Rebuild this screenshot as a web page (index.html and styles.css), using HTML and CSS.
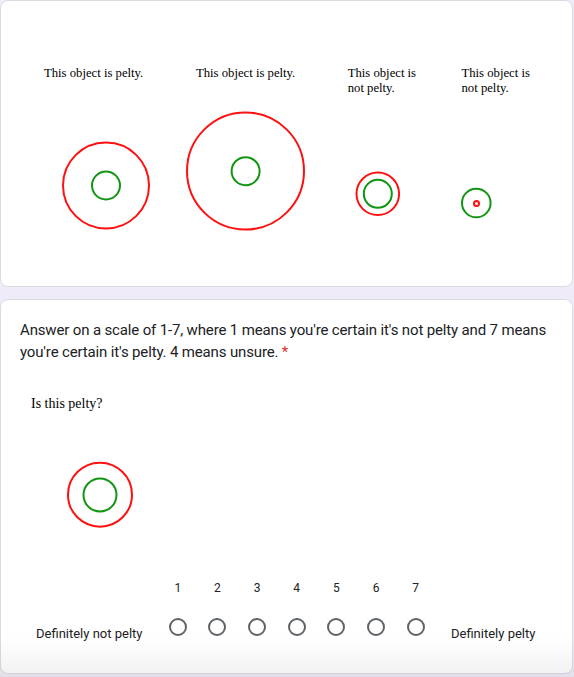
FILE: index.html
```html
<!DOCTYPE html>
<html lang="en">
<head>
<meta charset="utf-8">
<title>Is this pelty?</title>
<link rel="stylesheet" href="styles.css">
</head>
<body>
<main class="page">
  <section class="card card-figure">
    <svg class="figure" width="570" height="285" viewBox="0 0 570 285" aria-label="Examples of pelty and not pelty objects">
      <g transform="translate(-1,-1)">
        <text class="cap" x="44" y="77">This object is pelty.</text>
        <text class="cap" x="196" y="77">This object is pelty.</text>
        <text class="cap" x="347.7" y="77">This object is</text>
        <text class="cap" x="347.7" y="91.5">not pelty.</text>
        <text class="cap" x="461.5" y="77">This object is</text>
        <text class="cap" x="461.5" y="91.5">not pelty.</text>

        <circle class="red" cx="106" cy="185.5" r="43"/>
        <circle class="green" cx="106" cy="185.5" r="14"/>

        <circle class="red" cx="245.5" cy="171" r="58.5"/>
        <circle class="green" cx="245.6" cy="171.2" r="14"/>

        <circle class="red" cx="377.8" cy="193.8" r="21.3"/>
        <circle class="green" cx="377.8" cy="193.8" r="14"/>

        <circle class="green" cx="476.3" cy="203" r="14.3"/>
        <circle class="red" cx="476.5" cy="203.4" r="2.5"/>
      </g>
    </svg>
  </section>

  <section class="card card-question">
    <h2 class="q-title">Answer on a scale of 1-7, where 1 means you're certain it's not pelty and 7 means you're certain it's pelty. 4 means unsure. <span class="req">*</span></h2>

    <div class="q-image">
      <p class="q-caption">Is this pelty?</p>
      <svg class="q-svg" width="200" height="167.7" viewBox="0 0 200 167.7" aria-hidden="true">
        <circle class="red" cx="80" cy="82.7" r="32"/>
        <circle class="green" cx="80" cy="83" r="16.5"/>
      </svg>
    </div>

    <div class="scale">
      <div class="scale-label left">Definitely not pelty</div>
      <label class="opt"><span class="num">1</span><span class="radio"></span></label>
      <label class="opt"><span class="num">2</span><span class="radio"></span></label>
      <label class="opt"><span class="num">3</span><span class="radio"></span></label>
      <label class="opt"><span class="num">4</span><span class="radio"></span></label>
      <label class="opt"><span class="num">5</span><span class="radio"></span></label>
      <label class="opt"><span class="num">6</span><span class="radio"></span></label>
      <label class="opt"><span class="num">7</span><span class="radio"></span></label>
      <div class="scale-label right">Definitely pelty</div>
    </div>
  </section>
</main>
<div class="bottom-fade"></div>
</body>
</html>
```

FILE: styles.css
```css
* {
  box-sizing: border-box;
}

html, body {
  margin: 0;
  padding: 0;
}

body {
  background: #f0ebf8;
  font-family: Roboto, "Liberation Sans", Arial, sans-serif;
  color: #202124;
  width: 574px;
  height: 677px;
  overflow: hidden;
}

.page {
  display: flex;
  flex-direction: column;
  gap: 12px;
  width: 573px;
}

.card {
  background: #ffffff;
  border: 1px solid #dadce0;
  border-radius: 8px;
  width: 573px;
}

.card-figure {
  height: 287px;
  overflow: hidden;
}

.figure {
  display: block;
}

.cap {
  font-family: "Liberation Serif", "Times New Roman", serif;
  font-size: 12.7px;
  fill: #000000;
}

.red {
  fill: none;
  stroke: #ff1010;
  stroke-width: 2;
}

.green {
  fill: none;
  stroke: #129512;
  stroke-width: 2;
}

.card-question {
  height: 375px;
  padding: 19px 16px 30px 19px;
}

.q-title {
  margin: 0;
  font-family: Roboto, "Liberation Sans", Arial, sans-serif;
  font-weight: 400;
  font-size: 15px;
  letter-spacing: -0.15px;
  line-height: 22px;
  color: #202124;
}

.req {
  color: #d93025;
}

.q-image {
  margin-top: 33px;
}

.q-caption {
  margin: 0;
  padding-left: 11px;
  font-family: "Liberation Serif", "Times New Roman", serif;
  font-size: 14px;
  line-height: 16px;
  color: #000000;
}

.q-svg {
  display: block;
}

.scale {
  display: flex;
  align-items: flex-end;
  padding-left: 16px;
}

.scale-label {
  font-size: 13px;
  line-height: 16px;
  color: #202124;
  white-space: nowrap;
}

.scale-label.left {
  width: 122px;
}

.scale-label.right {
  margin-left: 15.5px;
}

.opt {
  width: 39.65px;
  display: flex;
  flex-direction: column;
  align-items: center;
  padding-bottom: 6px;
}

.num {
  font-size: 12px;
  line-height: 16px;
  color: #202124;
}

.radio {
  margin-top: 22px;
  width: 18px;
  height: 18px;
  border: 2px solid #5f6368;
  border-radius: 50%;
}

.bottom-fade {
  position: fixed;
  left: 0;
  right: 0;
  bottom: 0;
  height: 40px;
  background: linear-gradient(to bottom, rgba(0, 0, 0, 0), rgba(0, 0, 0, 0.055));
  pointer-events: none;
}
```
